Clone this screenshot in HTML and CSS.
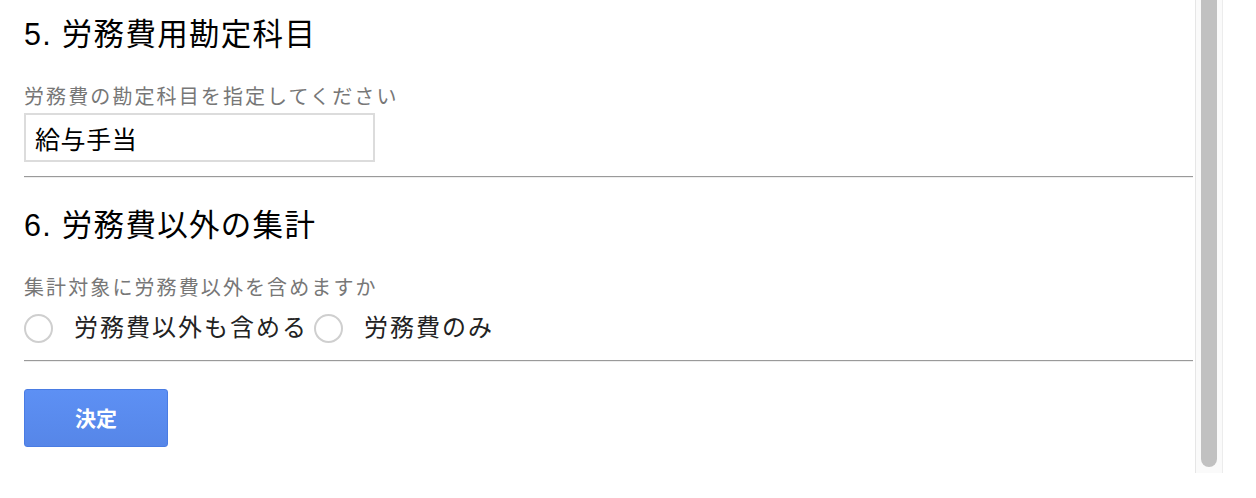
FILE: index.html
```html
<!DOCTYPE html>
<html lang="ja">
<head>
<meta charset="utf-8">
<title>労務費設定</title>
<link rel="stylesheet" href="styles.css">
</head>
<body>
<div class="page">
  <main class="content">
    <section class="question">
      <h2 class="q-title">5. 労務費用勘定科目</h2>
      <label class="q-help" for="account">労務費の勘定科目を指定してください</label>
      <input class="q-input" id="account" type="text" value="給与手当">
    </section>
    <hr class="divider">
    <section class="question q-second">
      <h2 class="q-title">6. 労務費以外の集計</h2>
      <div class="q-help">集計対象に労務費以外を含めますか</div>
      <div class="radio-row">
        <label class="radio"><input type="radio" name="scope"><span class="radio-text">労務費以外も含める</span></label>
        <label class="radio"><input type="radio" name="scope"><span class="radio-text">労務費のみ</span></label>
      </div>
    </section>
    <hr class="divider">
    <button class="submit" type="button">決定</button>
  </main>
  <div class="scrollbar"><div class="thumb"></div></div>
</div>
</body>
</html>
```

FILE: styles.css
```css
html, body {
  margin: 0;
  padding: 0;
  background: #fff;
  overflow: hidden;
}
body {
  font-family: "Liberation Sans", "Noto Sans CJK JP", sans-serif;
  color: #000;
}
.page {
  display: flex;
  align-items: flex-start;
  width: 1256px;
  height: 498px;
}
.content {
  width: 1169px;
  padding: 16px 1px 0 24px;
  flex: none;
}
.question {
  display: flex;
  flex-direction: column;
  align-items: flex-start;
}
.q-title {
  margin: 0;
  font-size: 30.5px;
  line-height: 36px;
  letter-spacing: 1.3px;
  font-weight: normal;
  color: #000;
}
.q-help {
  margin-top: 33px;
  font-size: 20px;
  line-height: 24px;
  letter-spacing: 2.1px;
  color: #777;
}
.q-input {
  margin: 4px 0 0;
  box-sizing: border-box;
  width: 351px;
  height: 49px;
  border: 2px solid #dcdcdc;
  padding: 0 9px;
  font-family: "Liberation Sans", "Noto Sans CJK JP", sans-serif;
  font-size: 25px;
  letter-spacing: 0.6px;
  color: #000;
  outline: none;
}
.divider {
  margin: 14px 0 0;
  height: 0;
  border: 0;
  border-top: 1px solid #9a9a9a;
  border-bottom: 1px solid #eeeeee;
}
.q-second {
  padding-top: 29px;
}
.radio-row {
  display: flex;
  margin-top: 10px;
  height: 36px;
  align-items: center;
}
.radio {
  display: flex;
  align-items: center;
}
.radio input {
  appearance: none;
  -webkit-appearance: none;
  margin: 0;
  width: 29px;
  height: 29px;
  box-sizing: border-box;
  border: 2px solid #cfcfcf;
  border-radius: 50%;
  background: #fff;
}
.radio-text {
  margin-left: 21px;
  font-size: 24px;
  line-height: 30px;
  letter-spacing: 2px;
  color: #222;
}
.radio + .radio input {
  margin-left: 6px;
}
.submit {
  display: block;
  margin-top: 27px;
  width: 144px;
  height: 58px;
  box-sizing: border-box;
  border: 1px solid #4a7ce3;
  border-radius: 3px;
  background: linear-gradient(#5d90f4, #5686e8);
  color: #fff;
  font-family: "Noto Sans CJK JP", sans-serif;
  font-size: 21px;
  font-weight: bold;
  padding: 0 0 3px;
}
.scrollbar {
  flex: none;
  width: 28px;
  height: 473px;
  margin-left: 1px;
  box-sizing: border-box;
  background: #fafafa;
  border-left: 1px solid #e6e6e6;
  border-right: 1px solid #ececec;
  display: flex;
  justify-content: center;
}
.thumb {
  width: 16px;
  height: 467px;
  background: #c1c1c1;
  border-radius: 0 0 8px 8px;
}
```
